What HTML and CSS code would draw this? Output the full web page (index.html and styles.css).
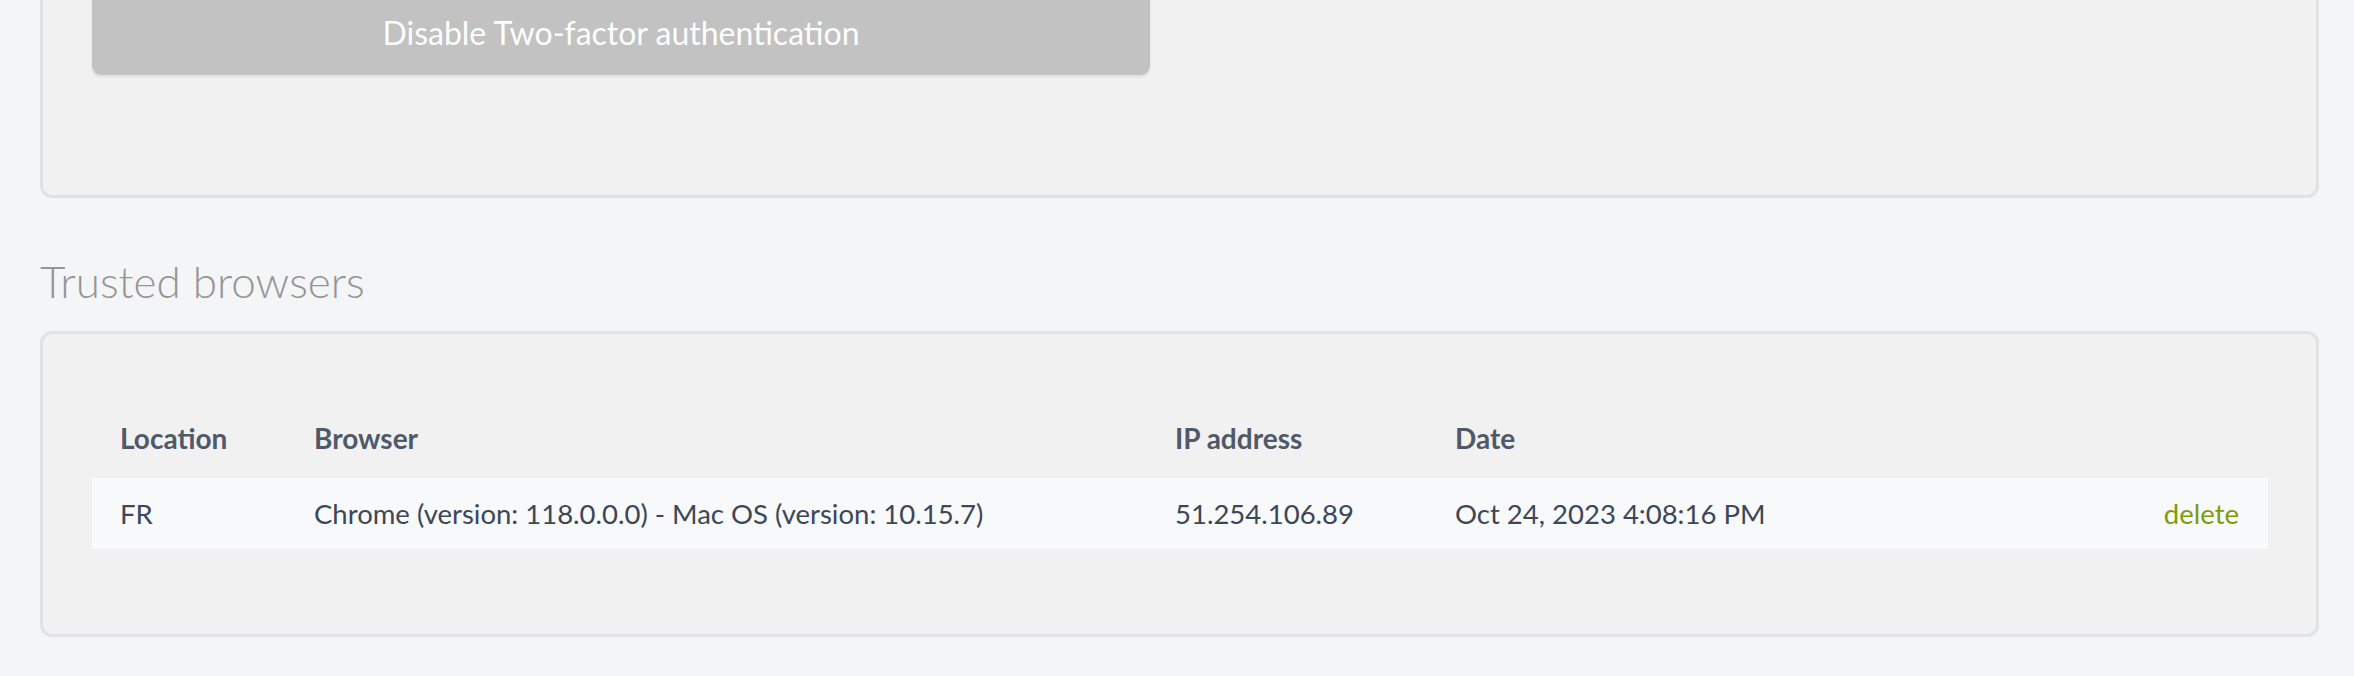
FILE: index.html
```html
<!DOCTYPE html>
<html lang="en">
<head>
<meta charset="utf-8">
<title>Security</title>
<link rel="stylesheet" href="styles.css">
</head>
<body>
<main class="page">
  <section class="card card-2fa">
    <button class="btn-disable" type="button">Disable Two-factor authentication</button>
  </section>

  <h2 class="section-title">Trusted browsers</h2>

  <section class="card card-table">
    <div class="table">
      <div class="tr th">
        <div class="cell">Location</div>
        <div class="cell">Browser</div>
        <div class="cell">IP address</div>
        <div class="cell">Date</div>
        <div class="cell"></div>
      </div>
      <div class="tr row">
        <div class="cell">FR</div>
        <div class="cell">Chrome (version: 118.0.0.0) - Mac OS (version: 10.15.7)</div>
        <div class="cell">51.254.106.89</div>
        <div class="cell">Oct 24, 2023 4:08:16 PM</div>
        <div class="cell action"><a class="delete" href="#">delete</a></div>
      </div>
    </div>
  </section>
</main>
</body>
</html>
```

FILE: styles.css
```css
* { box-sizing: border-box; }

html, body {
  margin: 0;
  padding: 0;
  background: #f4f5f7;
  font-family: Lato, "Open Sans", "Liberation Sans", sans-serif;
  overflow: hidden;
}

.page {
  padding: 0 35px 0 40px;
}

.card {
  background: #f1f1f1;
  border: 3px solid #e1e2e3;
  border-radius: 12px;
}

.card-2fa {
  margin-top: -64px;
  padding: 50px 48px 120px 49px;
}

.btn-disable {
  display: block;
  width: 1058px;
  height: 86px;
  border: 0;
  border-radius: 9px;
  background: #c2c2c2;
  color: #fdfdfd;
  font-family: Lato, "Open Sans", sans-serif;
  font-size: 32px;
  font-weight: 400;
  box-shadow: 0 2px 3px rgba(0, 0, 0, 0.08);
  cursor: default;
}

.section-title {
  margin: 57px 0 23px 0;
  font-size: 44px;
  font-weight: 300;
  line-height: 1.2;
  color: #959595;
}

.card-table {
  padding: 66px 48px 85px 49px;
}

.tr {
  display: grid;
  grid-template-columns: 194px 861px 280px 1fr auto;
  align-items: center;
}

.cell {
  padding: 0 29px 0 28px;
}

.th {
  padding: 22px 0 23px 0;
  font-size: 28px;
  font-weight: 700;
  color: #4f5968;
  line-height: 1.2;
}

.row {
  height: 71px;
  background: #f8f9fb;
  font-size: 27.5px;
  color: #3d4756;
  line-height: 1.2;
}

.action {
  text-align: right;
}

.delete {
  color: #7f9a0b;
  text-decoration: none;
}
```
